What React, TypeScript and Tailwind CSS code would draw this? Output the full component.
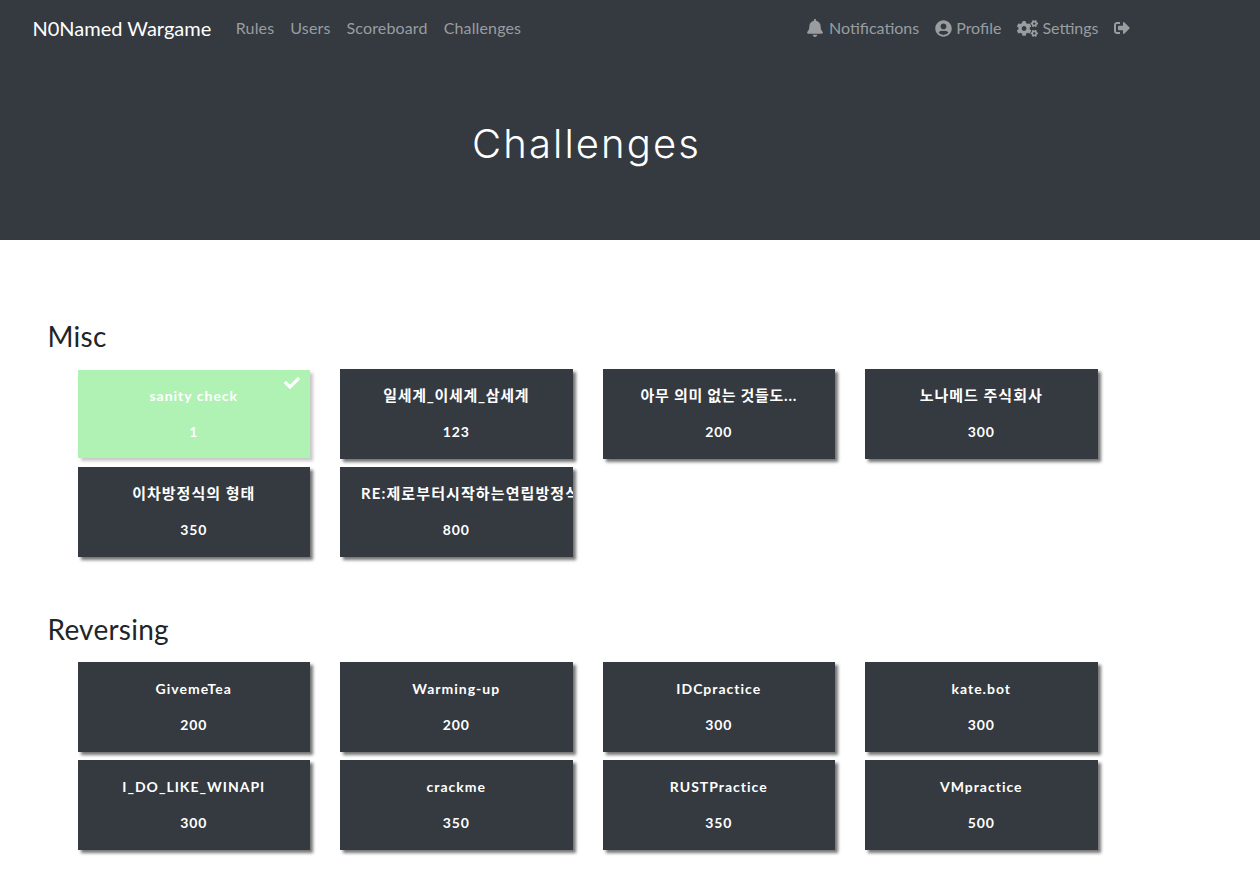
import { FaBell, FaUserCircle, FaCogs, FaSignOutAlt, FaCheck } from "react-icons/fa";

type Ch = { name: string; value: number; solved?: boolean; ko?: string };

const misc: Ch[] = [
  { name: "sanity check", value: 1, solved: true },
  { name: "일세계_이세계_삼세계", value: 123, ko: "tracking-[0.7px]" },
  { name: "아무 의미 없는 것들도...", value: 200, ko: "tracking-[0.7px]" },
  { name: "노나메드 주식회사", value: 300, ko: "tracking-[1px]" },
  { name: "이차방정식의 형태", value: 350, ko: "tracking-[1px]" },
  { name: "RE:제로부터시작하는연립방정식", value: 800, ko: "tracking-[1.1px]" },
];

const reversing: Ch[] = [
  { name: "GivemeTea", value: 200 },
  { name: "Warming-up", value: 200 },
  { name: "IDCpractice", value: 300 },
  { name: "kate.bot", value: 300 },
  { name: "I_DO_LIKE_WINAPI", value: 300 },
  { name: "crackme", value: 350 },
  { name: "RUSTPractice", value: 350 },
  { name: "VMpractice", value: 500 },
];

function Card({ c }: { c: Ch }) {
  return (
    <div className="px-[15px] pb-2">
      <div
        className={
          c.solved
            ? "relative h-[88px] my-px flex flex-col items-center overflow-hidden bg-[#b0f1b4] px-[21px] shadow-[3px_3px_3px_#c8c8c8]"
            : "relative h-[90px] flex flex-col items-center overflow-hidden bg-[#343a40] px-[21px] shadow-[3px_3px_3px_#757575]"
        }
      >
        {c.solved && <FaCheck className="absolute right-[10px] top-[5px] text-white" size={16} />}
        <div
          className={
            (c.solved ? "pt-[15px] " : "pt-[16px] ") +
            (c.ko ? "text-[15px] " + c.ko + " " : "text-[14px] tracking-[1px] ") +
            "w-full whitespace-nowrap text-center leading-[21px] font-bold text-white"
          }
        >
          {c.name}
        </div>
        <div className="pt-[15px] text-center text-[14px] leading-[21px] font-bold tracking-[0.8px] text-white">{c.value}</div>
      </div>
    </div>
  );
}

function Section({ title, items, className }: { title: string; items: Ch[]; className: string }) {
  return (
    <section className={className}>
      <h3 className="pl-[31px] text-[28px] leading-[34px] font-normal tracking-[0.25px] text-[#212529]">{title}</h3>
      <div className="mt-[16px] ml-[46px] grid w-[1050px] grid-cols-4">
        {items.map((c) => (
          <Card key={c.name} c={c} />
        ))}
      </div>
    </section>
  );
}

function NavLink({ label }: { label: string }) {
  return <a className="px-2 text-[16px] leading-6 tracking-[0.15px] text-[#9a9da0]">{label}</a>;
}

function IconLink({ icon, label, className }: { icon: React.ReactNode; label?: string; className?: string }) {
  return (
    <a className={"flex items-center gap-1 px-2 text-[16px] leading-6 text-[#9a9da0] " + (className ?? "")}>
      {icon}
      {label}
    </a>
  );
}

export default function App() {
  return (
    <div className="min-h-[894px] w-full bg-white font-['Lato','Noto_Sans_CJK_KR',sans-serif]">
      <div className="h-[240px] bg-[#343a40]">
        <div className="ml-[16.5px] w-[1140px]">
          <nav className="flex h-[56px] items-center px-4">
            <span className="mr-[16.5px] text-[20px] leading-[30px] text-white">N0Named Wargame</span>
            <NavLink label="Rules" />
            <NavLink label="Users" />
            <NavLink label="Scoreboard" />
            <NavLink label="Challenges" />
            <div className="ml-auto mr-[3px] flex items-center">
              <IconLink icon={<FaBell size={18} className="mr-px" />} label="Notifications" />
              <IconLink icon={<FaUserCircle size={17} />} label="Profile" />
              <IconLink icon={<FaCogs size={21} />} label="Settings" />
              <IconLink icon={<FaSignOutAlt size={16} />} className="-ml-px" />
            </div>
          </nav>
          <h1 className="mt-[60px] text-center font-['Inter',sans-serif] text-[40px] leading-[56px] font-light tracking-[2.1px] text-white">
            Challenges
          </h1>
        </div>
      </div>
      <div className="ml-[16.5px]">
        <Section title="Misc" items={misc} className="pt-[79px]" />
        <Section title="Reversing" items={reversing} className="pt-[47px] pb-[36px]" />
      </div>
    </div>
  );
}
